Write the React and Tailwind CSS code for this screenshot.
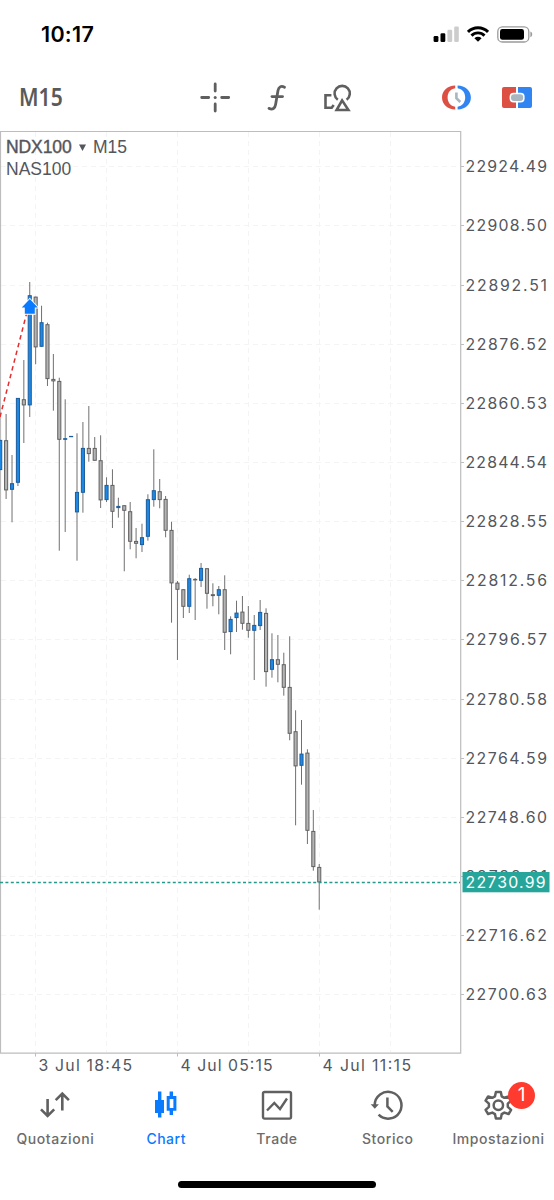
import React from 'react';

const UP = '#1e88e5';

// [high, low, body top, body bottom, direction]
const CANDLES = [
  [440, 470, 440, 470, 1],
  [414, 499, 440.3, 490.3, 0],
  [455, 522.3, 483.3, 489.7, 1],
  [398, 486, 398, 482.7, 1],
  [360, 443, 399.3, 405.3, 0],
  [282, 417, 295.3, 405.3, 1],
  [296.7, 364.3, 296.7, 347.3, 0],
  [305.7, 347, 322.3, 346.7, 1],
  [322.7, 386, 324.3, 379, 0],
  [354, 410.7, 379, 381.3, 0],
  [377.7, 550.7, 381, 439.7, 0],
  [399.3, 532, 438.3, 439.7, 1],
  [436, 437, 436, 437, 1],
  [433.3, 560.7, 492, 512.3, 1],
  [422, 512.7, 448, 492.7, 1],
  [406, 461.7, 448, 454, 0],
  [437, 460.7, 448, 460.7, 0],
  [435.3, 508, 460.3, 500.3, 0],
  [477.3, 502, 485, 500, 1],
  [469.3, 528, 485, 511.7, 0],
  [497.7, 517.7, 506, 508, 1],
  [505.3, 571.3, 505.3, 510.7, 0],
  [502, 549.3, 511.3, 541.7, 0],
  [528, 558.3, 541, 543.7, 0],
  [523.7, 552, 537.3, 545, 1],
  [494.3, 540.7, 499.3, 536.7, 1],
  [449.3, 506.7, 490.3, 500, 1],
  [479, 508.3, 491.3, 500, 0],
  [496, 537.3, 499, 530.7, 0],
  [521.7, 622.7, 530, 583.3, 0],
  [581, 660, 582.7, 589.7, 0],
  [589.3, 618, 589.3, 606.7, 0],
  [574.7, 613, 578.3, 606.7, 1],
  [578, 620, 579, 580.3, 0],
  [563, 587, 568, 580.7, 1],
  [568.3, 608.7, 568.3, 593.7, 0],
  [583.3, 606.3, 594.3, 596, 0],
  [586, 614.3, 589.3, 595.7, 1],
  [575.3, 650, 589.3, 632.7, 0],
  [616.3, 654.3, 619, 632, 1],
  [600.7, 632, 612.7, 618, 1],
  [596, 629.7, 611.7, 623.7, 0],
  [606, 637.7, 623, 630.7, 0],
  [615, 680, 625, 630.7, 1],
  [600, 630, 612, 626, 1],
  [608.3, 686.7, 613, 672, 0],
  [633.3, 677.7, 659.3, 669.7, 1],
  [635, 682.3, 659.3, 664.7, 0],
  [652.7, 695.7, 664.3, 687.7, 0],
  [636.3, 740.3, 687, 733.7, 0],
  [710.3, 825.3, 731.3, 766.3, 0],
  [720, 784.7, 753.7, 765.7, 1],
  [749.3, 844, 752.7, 830.7, 0],
  [810, 870.7, 831, 867, 0],
  [864, 909.7, 867, 882.3, 0],
];

const PRICES = [
  '22924.49', '22908.50', '22892.51', '22876.52', '22860.53', '22844.54', '22828.55', '22812.56',
  '22796.57', '22780.58', '22764.59', '22748.60', '22732.61', '22716.62', '22700.63',
];

const TIMES = [
  { x: 38.5, w: 93.5, label: '3 Jul 18:45' },
  { x: 180.5, w: 92, label: '4 Jul 05:15' },
  { x: 322.5, w: 88.5, label: '4 Jul 11:15' },
];

const GRID_X = [35.5, 106.5, 177.5, 248.5, 319.5, 390.5];

function StatusBar() {
  return (
    <header className="flex h-[64px] shrink-0 items-center justify-between pt-[4px] pr-[21px] pl-[41px]">
      <span className="font-[Inter,sans-serif] text-[21.5px] font-semibold tracking-[0.3px] text-black">10:17</span>
      <div className="flex items-center gap-[8px]">
        <svg width="26" height="16" viewBox="0 0 26 16">
          <rect x="0.6" y="10" width="4.8" height="6" rx="1.3" />
          <rect x="7.5" y="7.2" width="4.8" height="8.8" rx="1.3" />
          <rect x="14.4" y="3.8" width="4.8" height="12.2" rx="1.3" fill="#ccc" />
          <rect x="21.2" y="0.4" width="4.6" height="15.6" rx="1.3" fill="#ccc" />
        </svg>
        <svg width="22" height="16" viewBox="0 0 22 16">
          <g fill="none" stroke="#000" strokeWidth="2.9">
            <path d="M1 5.9a14.2 14.2 0 0 1 20 0" />
            <path d="M4.5 9.6a9.2 9.2 0 0 1 13 0" />
          </g>
          <path d="M11 15.8 7.4 12.2a5.1 5.1 0 0 1 7.2 0z" />
        </svg>
        <svg width="36" height="17" viewBox="0 0 36 17">
          <rect x="0.8" y="0.8" width="31" height="15.2" rx="4.6" fill="none" stroke="#9b9b9b" strokeWidth="1.3" />
          <rect x="3" y="3" width="24" height="10.8" rx="2.4" />
          <path d="M33.4 5.6c2.4.8 2.4 4.8 0 5.6z" fill="#9b9b9b" />
        </svg>
      </div>
    </header>
  );
}

function Toolbar() {
  return (
    <div className="flex h-[67px] shrink-0 items-center pl-[19px]">
      <span className="w-[181px] font-['Noto_Sans',sans-serif] text-[24.5px] font-semibold text-[#5a5a5a]">
        <span className="inline-block origin-left scale-x-[0.86]">M15</span>
      </span>
      <svg width="31" height="31" viewBox="0 0 31 31" className="mr-[36px] shrink-0">
        <g stroke="#5f5f5f" strokeWidth="2.8" strokeLinecap="round">
          <path d="M15.2 2v7M15.2 22v7M1.7 15.500h7M21.700 15.500h7" />
        </g>
        <circle cx="15.2" cy="15.5" r="1.5" fill="#5f5f5f" />
      </svg>
      <svg width="20" height="28" viewBox="0 0 20 28" className="mr-[37px] shrink-0">
        <g fill="none" stroke="#5f5f5f" strokeWidth="2.8" strokeLinecap="round">
          <path d="M17.5 3.3C14 1.3 11.7 3 11 6.6L8.6 20.4c-.7 4.1-2.9 5.6-6.6 4" />
          <path d="M5 12.6h10.5" />
        </g>
      </svg>
      <svg width="28" height="30" viewBox="0 0 28 30" className="mr-[89px] shrink-0">
        <g fill="none" stroke="#5f5f5f" strokeWidth="2.6">
          <path d="M13.8 16.7A7.6 7.6 0 1 1 22.6 16.7" />
          <path d="M7.4 12.3H1.5v12.5h6.2l2-2.7" />
          <path d="M18.1 17.4 12.6 27h11.800z" />
        </g>
      </svg>
      <svg width="31" height="27" viewBox="0 0 31 27" className="mr-[29px] shrink-0">
        <path d="M14.2 1.5C6.6 1.5 1 6.8 1 13.5s5.6 12 13.2 12v-2.8C9.500 22 6.600 18.300 6.600 13.500S9.500 5 14.200 4.300z" fill="#dd4f43" />
        <path d="M16.600 1.500C24.200 1.500 29.900 6.800 29.900 13.500s-5.700 12-13.300 12v-2.800C21.300 22 24.200 18.300 24.200 13.500S21.300 5 16.600 4.300z" fill="#3185f2" />
        <path d="M15.400 8.500v5.700l3.900 3.800" fill="none" stroke="#a8b6bf" strokeWidth="2.600" />
      </svg>
      <svg width="32" height="23" viewBox="0 0 32 23" className="shrink-0">
        <path d="M3 1h12v21H3a2 2 0 0 1-2-2V3a2 2 0 0 1 2-2z" fill="#dd4f43" />
        <path d="M17 1h12a2 2 0 0 1 2 2v17a2 2 0 0 1-2 2H17z" fill="#3185f2" />
        <rect x="8.600" y="6.800" width="15" height="9.600" rx="4" fill="#fff" />
        <rect x="10" y="8.200" width="12.200" height="6.800" rx="3" fill="#a8b6bf" />
      </svg>
    </div>
  );
}

function Chart() {
  return (
    <main className="relative h-[949px] shrink-0">
      <svg width="554" height="949" viewBox="0 131 554 949" className="block">
        <g stroke="#f4f4f4" strokeWidth="1" strokeDasharray="5 4">
          {GRID_X.map((x) => (
            <path key={x} d={`M${x} 132V1052`} />
          ))}
          {PRICES.map((p, i) => (
            <path key={p} d={`M1 ${Math.round(166.3 + i * 59.14) + 0.5}H460`} />
          ))}
        </g>
        <path d="M0.500 1053.200V131.500H460.700V1053.200z" fill="none" stroke="#bdbdbd" strokeWidth="1.200" />
        {CANDLES.map(([high, low, top, bottom, up], i) => {
          const x = 0.2 + i * 5.908;
          return (
            <g key={i}>
              <path d={`M${x} ${high}V${low}`} stroke="#707070" strokeWidth="1" />
              <rect
                x={x - 1.55}
                y={top + 0.4}
                width="3.1"
                height={Math.max(bottom - top - 0.8, 0.3)}
                fill={up ? UP : '#b4b4b4'}
                stroke={up ? '#1b5c9b' : '#606060'}
                strokeWidth="1"
              />
            </g>
          );
        })}
        <path d="M0 417 28 308" stroke="#e02f2f" strokeWidth="1.5" strokeDasharray="4.500 3.500" />
        <path d="M29.800 299 37.800 307.500H34.800V313.800H24.800V307.500H21.800z" fill="#0a7aff" stroke="#fff" strokeWidth="1.800" paintOrder="stroke" />
        <path d="M0 882.500H460" stroke="#26998a" strokeWidth="1.300" strokeDasharray="3 2.400" />
        <g stroke="#bdbdbd">
          {PRICES.map((p, i) => (
            <path key={p} d={`M461 ${Math.round(166.3 + i * 59.14) + 0.5}h3`} />
          ))}
          <path d="M35.500 1053v3.500M177.500 1053v3.500M319.500 1053v3.500" />
        </g>
        <g fill="#53565c" fontFamily="Inter, sans-serif" fontSize="15.8">
          {PRICES.map((p, i) => (
            <text key={p} x="465.500" y={172.3 + i * 59.14} textLength="81.500">{p}</text>
          ))}
          {TIMES.map((t) => (
            <text key={t.label} x={t.x} y="1071" textLength={t.w}>{t.label}</text>
          ))}
        </g>
        <rect x="462.500" y="872" width="87" height="20.300" fill="#26a69a" />
        <text x="465.500" y="888" textLength="80" fill="#fff" fontFamily="Inter, sans-serif" fontSize="15.800">22730.99</text>
      </svg>
      <div className="absolute top-[5px] left-[6px] font-['Liberation_Sans',sans-serif] text-[17.5px] leading-[22px] text-[#53565c]">
        <div className="flex items-center">
          <span className="w-[73px] tracking-[-0.1px] [-webkit-text-stroke:0.4px_#53565c]">NDX100</span>
          <svg width="7" height="7" viewBox="0 0 7 7" className="mr-[7px]">
            <path d="M0 .5h7L3.500 7z" fill="#53565c" />
          </svg>
          <span>M15</span>
        </div>
        <div>NAS100</div>
      </div>
    </main>
  );
}

const ICONS = {
  quotes: (
    <g fill="none" stroke="#606060" strokeWidth="2.600">
      <path d="M8.600 9v17M2 19.300l6.600 6.700 6.600-6.700M23.300 20.500V3.500M16.700 10.200l6.600-6.700 6.600 6.700" />
    </g>
  ),
  chart: (
    <g fill="#0a7aff">
      <path d="M8 1.500h3.400V10H14v13h-2.600v4.500H8V23H5V10h3z" />
      <path fillRule="evenodd" d="M19.600 1.500H23V6h3.400v14.800H23v4.200h-3.400v-4.200h-2.900V6h2.900zM19.700 9v8.900h3.700V9z" />
    </g>
  ),
  trade: (
    <g fill="none" stroke="#606060" strokeWidth="2.400">
      <rect x="2" y="2" width="28" height="26.600" rx="1.500" />
      <path d="M6 20.500 13.300 13l5.700 6L26 8.500" />
    </g>
  ),
  history: (
    <g fill="none" stroke="#606060" strokeWidth="2.500" transform="translate(-1.300 0)">
      <path d="M4 15A13.400 13.400 0 1 1 7.900 24.700" />
      <path d="M16.700 7.500v9l5.300 5.300" />
      <path d="M0 14.300h8.200L4.100 18.700z" fill="#606060" stroke="none" />
    </g>
  ),
  settings: (
    <g fill="none" stroke="#606060" strokeWidth="2.500" strokeLinejoin="round" transform="translate(-0.700 0)">
      <path d="M13.600 2h4.900l.9 4.300 2.700 1.500 4.200-1.300 2.500 4.200-3.300 3v3.100l3.300 3-2.500 4.200-4.200-1.400-2.700 1.600-.9 4.300h-4.900l-.9-4.300L10 22.600 5.800 24l-2.500-4.200 3.300-3v-3.100l-3.300-3 2.500-4.200L10 7.800l2.700-1.500z" />
      <circle cx="16.050" cy="15.250" r="4.700" />
    </g>
  ),
};

const TABS = [
  { id: 'quotes', label: 'Quotazioni' },
  { id: 'chart', label: 'Chart', active: true },
  { id: 'trade', label: 'Trade' },
  { id: 'history', label: 'Storico' },
  { id: 'settings', label: 'Impostazioni', badge: 1 },
];

function TabBar() {
  return (
    <nav className="grid h-[98px] shrink-0 grid-cols-5 pt-[10px] font-[Inter,sans-serif]">
      {TABS.map((t) => (
        <div key={t.id} className="flex flex-col items-center">
          <div className="relative h-[31px] w-[32px]">
            <svg width="32" height="31" viewBox="0 0 32 31" className="overflow-visible">{ICONS[t.id]}</svg>
            {t.badge && (
              <span className="absolute top-[-8.5px] left-[25.500px] flex size-[27px] items-center justify-center rounded-full bg-[#ff3b30] text-[19px] text-white">
                {t.badge}
              </span>
            )}
          </div>
          <span
            className={
              t.active
                ? 'mt-[8px] text-[14px] leading-[20px] font-medium tracking-[0.5px] text-[#0a7aff]'
                : 'mt-[8px] text-[14px] leading-[20px] font-medium tracking-[0.56px] text-[#6c6c6c]'
            }
          >
            {t.label}
          </span>
        </div>
      ))}
    </nav>
  );
}

export default function App() {
  return (
    <div className="flex h-[1200px] w-[554px] flex-col overflow-hidden bg-white">
      <StatusBar />
      <Toolbar />
      <Chart />
      <TabBar />
      <div className="ml-[178px] mt-[3px] h-[7px] w-[198px] rounded-full bg-black" />
    </div>
  );
}
